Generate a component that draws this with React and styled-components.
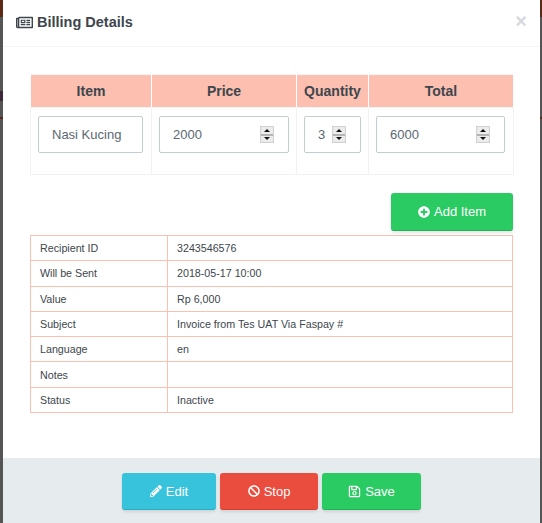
import styled, { createGlobalStyle } from 'styled-components';
import { FaRegNewspaper, FaPlusCircle, FaPencilAlt, FaBan, FaRegSave } from 'react-icons/fa';

const GlobalStyle = createGlobalStyle`
  html, body {
    margin: 0;
    padding: 0;
    height: 100%;
  }
  body {
    font-family: "Liberation Sans", Arial, sans-serif;
    color: #34495e;
    background:
      linear-gradient(#3a2a3a, #3a2a3a) 0 91px / 3px 10px no-repeat,
      linear-gradient(
        to bottom,
        #5e2a18 0,
        #5e2a18 17px,
        #555 17px,
        #555 117px,
        #5e2a18 117px,
        #5e2a18 119px,
        #555 119px
      );
  }
`;

const Modal = styled.div`
  box-sizing: border-box;
  width: 537px;
  height: 523px;
  margin-left: 3px;
  background: #fff;
  display: flex;
  flex-direction: column;
`;

const Header = styled.div`
  height: 46px;
  flex-shrink: 0;
  box-sizing: content-box;
  border-bottom: 1px solid #f2f4f5;
  display: flex;
  align-items: center;
  justify-content: space-between;
  padding: 0 13px 0 13px;
`;

const Title = styled.h4`
  margin: 0 0 2px;
  font-size: 14.5px;
  font-weight: 700;
  color: #3d464d;
  display: flex;
  align-items: center;
  gap: 4px;
`;

const Close = styled.button`
  border: 0;
  padding: 0;
  margin-bottom: 4px;
  background: none;
  font: 700 20px "Liberation Sans", Arial, sans-serif;
  color: #d5d9dd;
  line-height: 1;
`;

const Body = styled.div`
  flex: 1;
  padding: 27px 27px 0;
`;

const ItemTable = styled.table`
  width: 483px;
  border-collapse: collapse;
  table-layout: fixed;

  th {
    height: 32px;
    padding: 0;
    background: #fcbfb0;
    border: 1px solid #f2f4f5;
    border-right: 1px solid #fff;
    border-left: 1px solid #fff;
    font-size: 14px;
    font-weight: 700;
    color: #3d464d;
  }

  td {
    height: 67px;
    box-sizing: border-box;
    padding: 8px 7px 0;
    border: 1px solid #f0f3f4;
    vertical-align: top;
  }

  td:first-child,
  td:last-child {
    padding-right: 8px;
  }
`;

const Field = styled.div`
  box-sizing: border-box;
  height: 37px;
  display: flex;
  align-items: center;
  padding: 0 14px 0 13px;
  border: 1px solid #c3ced2;
  border-radius: 2px;
  background: #fff;
  font-size: 13px;
  color: #5a6872;
`;

const FieldValue = styled.span`
  flex: 1;
`;

const Spinner = styled.span`
  box-sizing: border-box;
  width: 14px;
  height: 17px;
  flex-shrink: 0;
  display: flex;
  flex-direction: column;
  gap: 2px;
  border: 1px solid #d0d0d0;
  background: #b4b4b4;
`;

const SpinHalf = styled.span`
  flex: 1;
  background: #ececec;
  display: flex;
  align-items: center;
  justify-content: center;
`;

const Arrow = styled.span`
  width: 0;
  height: 0;
  border-left: 3.5px solid transparent;
  border-right: 3.5px solid transparent;
  border-bottom: ${(props) => (props.$down ? '0' : '3px solid #111')};
  border-top: ${(props) => (props.$down ? '3px solid #111' : '0')};
`;

const AddRow = styled.div`
  display: flex;
  justify-content: flex-end;
  margin: 18px 0 4px;
`;

const Button = styled.button`
  box-sizing: border-box;
  width: ${(props) => props.$width}px;
  height: ${(props) => props.$height || 37}px;
  border: 0;
  border-bottom: 1px solid ${(props) => props.$shade};
  border-radius: 3px;
  background: ${(props) => props.$color};
  box-shadow: 0 2px 3px rgba(0, 0, 0, 0.1);
  color: #fff;
  font: 400 13px "Liberation Sans", Arial, sans-serif;
  display: inline-flex;
  align-items: center;
  justify-content: center;
  gap: 4px;
`;

const InfoTable = styled.table`
  width: 483px;
  border-collapse: collapse;
  table-layout: fixed;
  font-size: 10.7px;
  color: #3d464d;

  td {
    height: 25.3px;
    box-sizing: border-box;
    padding: 0 9px;
    border: 1px solid #fcbfb0;
  }

  td:first-child {
    width: 137px;
  }
`;

const Footer = styled.div`
  height: 65px;
  flex-shrink: 0;
  background: #e6ebee;
  display: flex;
  justify-content: center;
  gap: 4px;
  padding-top: 15px;
  box-sizing: border-box;
`;

const items = [
  { name: 'Item', width: 121, value: 'Nasi Kucing' },
  { name: 'Price', width: 145, value: '2000', spin: true },
  { name: 'Quantity', width: 72, value: '3', spin: true },
  { name: 'Total', width: 145, value: '6000', spin: true },
];

const details = [
  ['Recipient ID', '3243546576'],
  ['Will be Sent', '2018-05-17 10:00'],
  ['Value', 'Rp 6,000'],
  ['Subject', 'Invoice from Tes UAT Via Faspay #'],
  ['Language', 'en'],
  ['Notes', ''],
  ['Status', 'Inactive'],
];

export default function App() {
  return (
    <>
      <GlobalStyle />
      <Modal>
        <Header>
          <Title>
            <FaRegNewspaper size={17} />
            Billing Details
          </Title>
          <Close>×</Close>
        </Header>
        <Body>
          <ItemTable>
            <colgroup>
              {items.map((item) => (
                <col key={item.name} style={{ width: item.width }} />
              ))}
            </colgroup>
            <thead>
              <tr>
                {items.map((item) => (
                  <th key={item.name}>{item.name}</th>
                ))}
              </tr>
            </thead>
            <tbody>
              <tr>
                {items.map((item) => (
                  <td key={item.name}>
                    <Field>
                      <FieldValue>{item.value}</FieldValue>
                      {item.spin && (
                        <Spinner>
                          <SpinHalf>
                            <Arrow />
                          </SpinHalf>
                          <SpinHalf>
                            <Arrow $down />
                          </SpinHalf>
                        </Spinner>
                      )}
                    </Field>
                  </td>
                ))}
              </tr>
            </tbody>
          </ItemTable>
          <AddRow>
            <Button $width={122} $height={38} $color="#2acb63" $shade="#22b355">
              <FaPlusCircle size={12} />
              Add Item
            </Button>
          </AddRow>
          <InfoTable>
            <tbody>
              {details.map(([label, value]) => (
                <tr key={label}>
                  <td>{label}</td>
                  <td>{value}</td>
                </tr>
              ))}
            </tbody>
          </InfoTable>
        </Body>
        <Footer>
          <Button $width={94} $color="#38c3dc" $shade="#2aaec6">
            <FaPencilAlt size={12} />
            Edit
          </Button>
          <Button $width={98} $color="#ea4c3d" $shade="#d33f30">
            <FaBan size={12} />
            Stop
          </Button>
          <Button $width={99} $color="#2acb63" $shade="#22b355">
            <FaRegSave size={13} />
            Save
          </Button>
        </Footer>
      </Modal>
    </>
  );
}
